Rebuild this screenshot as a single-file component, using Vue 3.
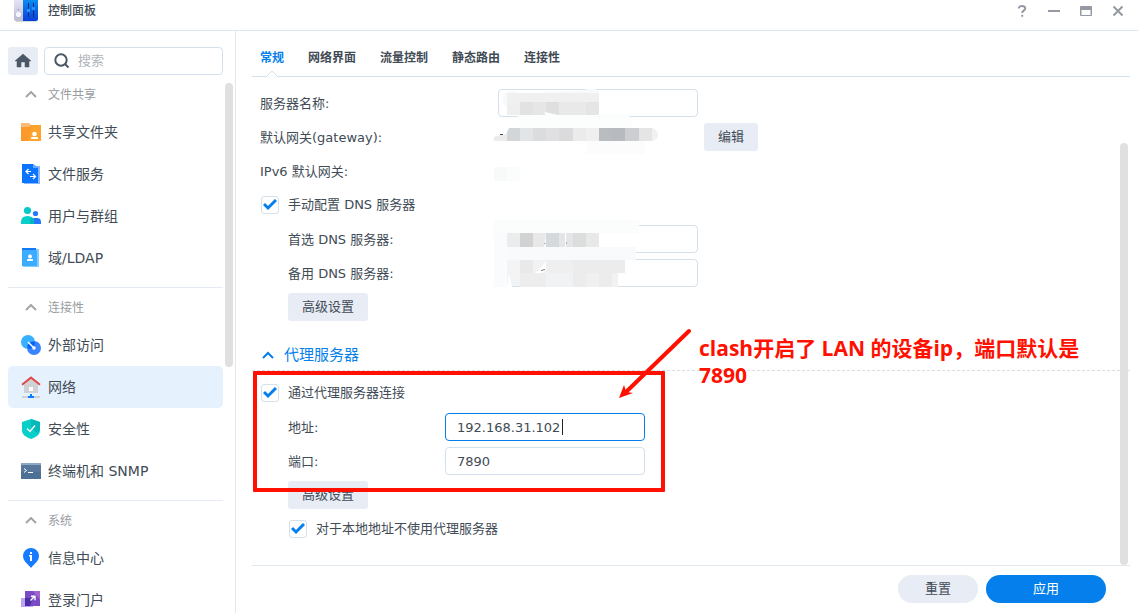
<script setup>
import { ref } from 'vue'

const groups = [
  {
    title: '文件共享',
    items: [
      { id: 'folder', label: '共享文件夹' },
      { id: 'fileservice', label: '文件服务' },
      { id: 'users', label: '用户与群组' },
      { id: 'ldap', label: '域/LDAP' },
    ],
  },
  {
    title: '连接性',
    items: [
      { id: 'external', label: '外部访问' },
      { id: 'network', label: '网络' },
      { id: 'security', label: '安全性' },
      { id: 'terminal', label: '终端机和 SNMP' },
    ],
  },
  {
    title: '系统',
    items: [
      { id: 'info', label: '信息中心' },
      { id: 'portal', label: '登录门户' },
    ],
  },
]
const active = ref('network')

const tabs = ['常规', '网络界面', '流量控制', '静态路由', '连接性']
const tab = ref('常规')

const serverName = ref('')
const dns1 = ref('')
const dns2 = ref('')
const manualDns = ref(true)
const useProxy = ref(true)
const bypassLocal = ref(true)
const address = ref('192.168.31.102')
const port = ref('7890')

// Mosaic tiles hiding private values: x, y, width, height, colour
const tiles = [
  [507, 93, 92, 9, '#f0f0f1'],
  [507, 102, 13, 13, '#efefef'],
  [520, 102, 13, 13, '#e2e2e3'],
  [533, 102, 13, 13, '#e6e6e7'],
  [546, 102, 13, 13, '#dfdfe0'],
  [559, 102, 27, 13, '#e9e9ea'],
  [586, 102, 13, 13, '#e5e5e6'],
  [507, 128, 13, 13, '#d3d6d9'],
  [520, 128, 13, 13, '#e3e4e5'],
  [533, 128, 13, 13, '#dbdcde'],
  [546, 128, 13, 13, '#e0e0e2'],
  [559, 128, 14, 13, '#dbdbdd'],
  [573, 128, 13, 13, '#ebebec'],
  [586, 128, 13, 13, '#efefef'],
  [599, 128, 13, 13, '#babdc0'],
  [612, 128, 13, 13, '#b7bbbf'],
  [625, 128, 14, 13, '#cdced2'],
  [639, 128, 13, 13, '#e5e5e6'],
  [586, 141, 59, 13, '#fcfcfc'],
  [494, 167, 13, 14, '#f8fafa'],
  [507, 167, 13, 14, '#fbfcfc'],
  [494, 220, 145, 13, '#fbfdfd'],
  [494, 233, 13, 54, '#fafbfd'],
  [507, 233, 13, 14, '#ececed'],
  [520, 233, 13, 14, '#d1d2d3'],
  [533, 233, 13, 14, '#e8e8e9'],
  [546, 233, 13, 14, '#d6d9dc'],
  [559, 233, 6, 14, '#e4e5e6'],
  [565, 233, 1, 14, '#ffffff'],
  [566, 233, 7, 14, '#e4e5e6'],
  [573, 233, 13, 14, '#dcdddd'],
  [586, 233, 13, 14, '#e8e8e9'],
  [507, 247, 129, 13, '#f9fafc'],
  [507, 260, 13, 13, '#f4f4f4'],
  [520, 260, 13, 13, '#e9e9ea'],
  [533, 260, 13, 13, '#f2f2f2'],
  [546, 260, 27, 13, '#efefef'],
  [573, 260, 52, 13, '#ececed'],
  [507, 273, 13, 13, '#f2f3f4'],
  [520, 273, 26, 14, '#ededee'],
  [546, 273, 27, 14, '#f1f2f3'],
  [573, 273, 13, 14, '#ececed'],
  [586, 273, 13, 14, '#f0f0f1'],
  [599, 273, 13, 14, '#ececed'],
  [612, 273, 6, 14, '#f2f2f3'],
]
</script>

<template>
  <div class="window">
    <header class="titlebar">
      <svg class="app-icon" width="24" height="24" viewBox="0 0 24 24" aria-hidden="true">
        <defs>
          <linearGradient id="cpBlue" x1="0" y1="0" x2="0" y2="1">
            <stop offset="0" stop-color="#0a8cf0" />
            <stop offset="1" stop-color="#0b3fd8" />
          </linearGradient>
          <linearGradient id="cpGrey" x1="0" y1="0" x2="0" y2="1">
            <stop offset="0" stop-color="#e3e3f4" />
            <stop offset="1" stop-color="#bcbcd2" />
          </linearGradient>
        </defs>
        <path d="M1 20h22l-1 2H2z" fill="#d5d8df" />
        <path d="M0 0h9v21H2a2 2 0 0 1-2-2z" fill="url(#cpGrey)" />
        <path d="M9 0h15v19a2 2 0 0 1-2 2H9z" fill="url(#cpBlue)" />
        <circle cx="4.5" cy="9.5" r=".6" fill="#777b92" />
        <circle cx="4.5" cy="15" r="3" fill="#aeb0c8" />
        <circle cx="4.5" cy="14.5" r="2.7" fill="#f5f5ff" />
        <path d="M14.500 3v14M19.500 3v14" stroke="#06287f" stroke-width="1" />
        <circle cx="14.500" cy="10.500" r="1.700" fill="#2b96ff" />
        <circle cx="19.500" cy="8.500" r="1.700" fill="#2b96ff" />
      </svg>
      <h1>控制面板</h1>
      <div class="window-tools">
        <button type="button" aria-label="帮助">
          <svg width="14" height="14" viewBox="0 0 14 14"><path d="M3.800 4.500C3.800 2.700 5.200 1.900 7 1.900s3.300.9 3.300 2.500C10.300 6.300 7.200 6.600 7.200 9M7.200 10.800v2" /></svg>
        </button>
        <button type="button" aria-label="最小化">
          <svg width="14" height="14" viewBox="0 0 14 14"><path d="M1 7h12" /></svg>
        </button>
        <button type="button" aria-label="最大化">
          <svg width="14" height="14" viewBox="0 0 14 14"><path class="solid" fill-rule="evenodd" d="M1 3q0-1 1-1h10q1 0 1 1v8q0 1-1 1H2q-1 0-1-1zM2.500 6v5h9V6z" /></svg>
        </button>
        <button type="button" aria-label="关闭">
          <svg width="14" height="14" viewBox="0 0 14 14"><path d="M2.500 2.500l9 9M11.500 2.500l-9 9" /></svg>
        </button>
      </div>
    </header>

    <div class="body">
      <aside class="sidebar">
        <div class="search-row">
          <button type="button" class="home" aria-label="主页">
            <svg width="16" height="16" viewBox="0 0 16 16"><path d="M8 1L0 8h2v6h4V9h4v5h4V8h2z" fill="#4b5766" stroke="#4b5766" stroke-width=".5" /></svg>
          </button>
          <label class="search">
            <svg width="16" height="16" viewBox="0 0 16 16"><circle cx="7" cy="7" r="5.700" /><path d="M11 11l3.500 3.500" /></svg>
            <input type="text" placeholder="搜索" aria-label="搜索" />
          </label>
        </div>
        <div class="nav-wrap">
          <nav>
            <section v-for="g in groups" :key="g.title" class="group">
              <h2>
                <svg width="12" height="8" viewBox="0 0 12 8"><path d="M1 6l5-5 5 5" /></svg>
                {{ g.title }}
              </h2>
              <a
                v-for="item in g.items"
                :key="item.id"
                href="#"
                :class="{ active: active === item.id }"
                @click.prevent="active = item.id"
              >
                <svg width="22" height="22" viewBox="0 0 22 22" aria-hidden="true">
                  <g v-if="item.id === 'folder'">
                    <path d="M1 2h8l2 2h10v4H1z" fill="#fbbb78" />
                    <path d="M1 6h8l2-2h10v16H1z" fill="#fb9a2a" />
                    <path d="M12 4h9v16H8z" fill="#ffab2e" opacity=".6" />
                    <circle cx="14.500" cy="13" r="2.300" fill="#fff" />
                    <path d="M11 18v-1q0-1 1-1h5q1 0 1 1v1z" fill="#fff" />
                  </g>
                  <g v-else-if="item.id === 'fileservice'">
                    <path d="M4 3h16v18H4z" fill="#8ab8ff" />
                    <path d="M2 1h11l5 4v15H2z" fill="#0b74ff" />
                    <path d="M13 1l5 4h-5z" fill="#69a8ff" />
                    <path d="M11 8.500H6M8.500 6L6 8.500 8.500 11M10 13.500h5.500M13 11l2.500 2.500L13 16" fill="none" stroke="#fff" stroke-width="1.200" />
                  </g>
                  <g v-else-if="item.id === 'users'">
                    <circle cx="15.500" cy="8.500" r="2.600" fill="#2378ff" />
                    <path d="M12 19v-4q0-2 2-2h3q4 0 4 4v2z" fill="#2378ff" />
                    <circle cx="7.500" cy="5.500" r="3.600" fill="#08c8cb" />
                    <path d="M1 19v-2q0-6 6.500-6T14 17v2z" fill="#08cfc9" />
                    <path d="M10 19v-4q0-2 2-2.500 2 1.500 2 4.500v2z" fill="#05b6b8" />
                  </g>
                  <g v-else-if="item.id === 'ldap'">
                    <path d="M3 2h16v18H3z" fill="#83ccff" />
                    <path d="M2 1h14v3H2z" fill="#1578f5" />
                    <path d="M2 4q0-1 1-1h13l1 1v15H2z" fill="#3bacff" />
                    <circle cx="10" cy="9.500" r="1.900" fill="#fff" />
                    <path d="M7 14v-1q0-1 1-1h4q1 0 1 1v1z" fill="#fff" />
                  </g>
                  <g v-else-if="item.id === 'external'">
                    <circle cx="8" cy="8" r="7" fill="#36b0ff" />
                    <circle cx="14" cy="14" r="7" fill="#3a84ff" />
                    <path d="M7.300 12A7 7 0 0 1 15 8a7 7 0 0 1-6.400 7 7 7 0 0 1-1.300-3z" fill="#0464f5" />
                    <path d="M8 8l6 6" fill="none" stroke="#fff" stroke-width="1.500" />
                    <circle cx="14" cy="14" r="1.700" fill="#fff" />
                  </g>
                  <g v-else-if="item.id === 'network'">
                    <path d="M4 8.500L11 3l7 5.500V17H4z" fill="#cfd1d4" />
                    <path d="M9 11h4v4H9z" fill="#fff" />
                    <path d="M2 8.800L11 1.600l9 7.200" fill="none" stroke="#dc4a48" stroke-width="2" />
                    <path d="M2 20h18v2H2z" fill="#cfd1d4" />
                    <path d="M10 18h2v2h2v2H8v-2h2z" fill="#0c7bff" />
                  </g>
                  <g v-else-if="item.id === 'security'">
                    <path d="M11 1l9 3v8c0 5-4 7-9 9-5-2-9-4-9-9V4z" fill="#08cfc8" />
                    <path d="M11 1l9 3v8l-3 3-6-6z" fill="#05b9ba" />
                    <path d="M7 10.500l3 3 5-6" fill="none" stroke="#fff" stroke-width="1.400" />
                  </g>
                  <g v-else-if="item.id === 'terminal'">
                    <path d="M1 3h20v16H1z" fill="#57789c" />
                    <path d="M1 3h20v2H1z" fill="#8fa9c4" />
                    <path d="M1 12h20v7H1z" fill="#466a91" opacity=".6" />
                    <path d="M4 8.500l2.500 2L4 12.500M8 12.500h5" fill="none" stroke="#fff" />
                  </g>
                  <g v-else-if="item.id === 'info'">
                    <path d="M11 1a8 8 0 0 1 8 8c0 5-5 8-8 12-3-4-8-7-8-12a8 8 0 0 1 8-8z" fill="#167bff" />
                    <path d="M10 5h2v2h-2zM9 8h3v6h-2V9.500H9z" fill="#fff" />
                  </g>
                  <g v-else>
                    <path d="M1 9h12v9H1z" fill="#bca4f0" />
                    <path d="M5 2h15v15H5z" fill="#7a4bc4" />
                    <path d="M5 9h8l-3 8H5z" fill="#4c2fa6" />
                    <path d="M13 2h7v9z" fill="#a262d2" />
                    <path d="M10.500 11.500l4-4M11 7.200h4v4" fill="none" stroke="#fff" stroke-width="1.400" />
                  </g>
                </svg>
                {{ item.label }}
              </a>
            </section>
          </nav>
          <div class="nav-scroll"></div>
        </div>
      </aside>

      <main class="main">
        <div class="tabs" role="tablist">
          <button
            v-for="t in tabs"
            :key="t"
            type="button"
            role="tab"
            :class="{ on: t === tab }"
            :aria-selected="t === tab"
            @click="tab = t"
          >
            {{ t }}
            <svg v-if="t === tab" width="12" height="7" viewBox="0 0 12 7"><path d="M0 7l6-6 6 6" /></svg>
          </button>
        </div>

        <form class="form" @submit.prevent>
          <div class="row">
            <label class="name" for="server">服务器名称:</label>
            <input id="server" v-model="serverName" class="text" type="text" />
          </div>
          <div class="row">
            <span class="name">默认网关(gateway):</span>
            <span class="value"></span>
            <button type="button" class="btn small">编辑</button>
          </div>
          <div class="row"><span class="name">IPv6 默认网关:</span></div>
          <div class="row">
            <label class="check">
              <input v-model="manualDns" type="checkbox" />
              <svg v-if="manualDns" width="14" height="12" viewBox="0 0 14 12"><path d="M1 5l4 4 8-8" /></svg>
              手动配置 DNS 服务器
            </label>
          </div>
          <div class="row sub">
            <label class="name" for="dns1">首选 DNS 服务器:</label>
            <input id="dns1" v-model="dns1" class="text" type="text" />
          </div>
          <div class="row sub">
            <label class="name" for="dns2">备用 DNS 服务器:</label>
            <input id="dns2" v-model="dns2" class="text" type="text" />
          </div>
          <div class="row sub"><button type="button" class="btn">高级设置</button></div>

          <h3>
            <svg width="12" height="8" viewBox="0 0 12 8"><path d="M1 7l5-5 5 5" /></svg>
            代理服务器
          </h3>

          <div class="row">
            <label class="check">
              <input v-model="useProxy" type="checkbox" />
              <svg v-if="useProxy" width="14" height="12" viewBox="0 0 14 12"><path d="M1 5l4 4 8-8" /></svg>
              通过代理服务器连接
            </label>
          </div>
          <div class="row sub proxy">
            <label class="name" for="addr">地址:</label>
            <span class="field">
              <input id="addr" v-model="address" class="text focused" type="text" />
              <i class="caret"></i>
            </span>
          </div>
          <div class="row sub proxy">
            <label class="name" for="port">端口:</label>
            <input id="port" v-model="port" class="text" type="text" />
          </div>
          <div class="row sub"><button type="button" class="btn">高级设置</button></div>
          <div class="row sub">
            <label class="check">
              <input v-model="bypassLocal" type="checkbox" />
              <svg v-if="bypassLocal" width="14" height="12" viewBox="0 0 14 12"><path d="M1 5l4 4 8-8" /></svg>
              对于本地地址不使用代理服务器
            </label>
          </div>

          <svg class="mosaic" width="180" height="204" viewBox="488 86 180 204" aria-hidden="true">
            <path d="M507 92q-6 4-4 11l4 5h92V91q-5-4-15-1l-63 4q-7-4-14-2z" fill="#f8f9f9" />
            <path d="M518 115h80l2 2 2-3h27l3 14h-18l-15 13h-93l15-13z" fill="#fcfdfd" />
            <path d="M494 141v-4l13-4v8z" fill="#ebebec" />
            <path d="M652 128q6 2 6 7t-6 6z" fill="#f1f1f1" />
            <rect v-for="(t, i) in tiles" :key="i" :x="t[0]" :y="t[1]" :width="t[2]" :height="t[3]" :fill="t[4]" />
            <path d="M544 112l14 3h-12z" fill="#fff" />
            <path d="M494 136V128h15l-3 6z" fill="#fff" />
            <path d="M500 134h3v1h-3z" fill="#414b55" />
            <path d="M535 273q9-7 11-13v10l-4 3z" fill="#fff" />
            <path d="M541 270.500l4-1M544 243.500h2M566 243h1" stroke="#777" fill="none" />
            <path d="M546 233v14h-2z" fill="#fff" opacity=".7" />
            <path d="M509 273l3 14h-5z" fill="#fff" />
          </svg>
        </form>

        <div class="main-scroll"></div>

        <footer class="actions">
          <button type="button" class="reset">重置</button>
          <button type="button" class="apply">应用</button>
        </footer>
      </main>
    </div>

    <div class="mark"></div>
    <svg class="arrow" width="80" height="80" viewBox="0 0 80 80" aria-hidden="true">
      <path d="M74 6L11 67" stroke="#ff1000" stroke-width="4" stroke-linecap="round" />
      <path d="M4 73l5-13 2 6 1 1 6 1z" fill="#ff1000" />
    </svg>
    <p class="note">clash开启了 LAN 的设备ip，端口默认是<br />7890</p>
  </div>
</template>

<style>
body {
  background: #fff;
  overflow: hidden;
}
</style>

<style scoped>
* {
  box-sizing: border-box;
}
.window {
  position: relative;
  display: flex;
  flex-direction: column;
  height: 100vh;
  overflow: hidden;
  background: #fff;
  color: #414b55;
  font: 13px/20px "DejaVu Sans", "Noto Sans CJK SC", sans-serif;
}
button,
input {
  font: inherit;
  color: inherit;
}
button {
  padding: 0;
  border: 0;
  background: none;
}
svg {
  flex: none;
}
.titlebar {
  display: flex;
  flex: none;
  align-items: flex-start;
  height: 31px;
  padding: 0 12px 0 14px;
  border-bottom: 1px solid #dce6ef;
}
.titlebar h1 {
  flex: 1;
  margin: 0 0 0 10px;
  font-size: 12px;
  font-weight: 500;
  line-height: 22px;
}
.window-tools {
  display: flex;
  gap: 16px;
  padding-top: 3px;
}
.window-tools button {
  display: flex;
  align-items: center;
  justify-content: center;
  width: 16px;
  height: 16px;
}
.window-tools path {
  fill: none;
  stroke: #9499a3;
  stroke-width: 2;
}
.window-tools .solid {
  fill: #9499a3;
  stroke: none;
}
.body {
  display: flex;
  flex: 1;
  min-height: 0;
}
.sidebar {
  display: flex;
  flex: none;
  flex-direction: column;
  width: 236px;
  padding: 16px 2px 0 8px;
  border-right: 1px solid #dfe7ef;
}
.search-row {
  display: flex;
  gap: 6px;
  padding-right: 10px;
}
.home {
  display: flex;
  align-items: center;
  justify-content: center;
  width: 30px;
  height: 28px;
  border-radius: 3px;
  background: #e8ecf5;
}
.search {
  display: flex;
  flex: 1;
  gap: 8px;
  align-items: center;
  min-width: 0;
  height: 28px;
  padding: 0 9px;
  border: 1px solid #d4e0eb;
  border-radius: 4px;
}
.search svg {
  fill: none;
  stroke: #4b5766;
  stroke-width: 2;
}
.search input {
  flex: 1;
  min-width: 0;
  padding: 0;
  border: 0;
  outline: 0;
  background: none;
}
.search input::placeholder {
  color: #b0b5bb;
}
.nav-wrap {
  display: flex;
  flex: 1;
  gap: 2px;
  min-height: 0;
  margin-top: 3px;
}
nav {
  flex: 1;
  min-width: 0;
  overflow: hidden;
}
.nav-scroll {
  width: 8px;
  height: 53%;
  margin-top: 5px;
  border-radius: 4px;
  background: #e0e0e0;
}
.group {
  padding-bottom: 8px;
}
.group + .group {
  padding-top: 3px;
  border-top: 1px solid #e4ebf3;
}
.group h2 {
  display: flex;
  align-items: center;
  gap: 11px;
  height: 33px;
  margin: 0;
  padding-left: 17px;
  color: #979ca2;
  font-size: 12px;
  font-weight: 400;
}
.group h2 path {
  fill: none;
  stroke: #a2a5aa;
  stroke-width: 2;
}
.group a {
  display: flex;
  align-items: center;
  gap: 6px;
  height: 42px;
  padding-left: 12px;
  border-radius: 5px;
  color: #414b55;
  font-size: 14px;
  text-decoration: none;
}
.group a.active {
  background: #e6f1fe;
}
.main {
  position: relative;
  display: flex;
  flex: 1;
  flex-direction: column;
  min-width: 0;
  padding: 0 8px 0 16px;
}
.tabs {
  display: flex;
  flex: none;
  gap: 24px;
  height: 46px;
  padding: 0 8px;
  border-bottom: 1px solid #d4e0eb;
}
.tabs button {
  position: relative;
  padding-bottom: 8px;
  padding-top: 16px;
  font-size: 12px;
  font-weight: 700;
  line-height: 20px;
}
.tabs .on {
  color: #057feb;
}
.tabs svg {
  position: absolute;
  bottom: -1px;
  left: 6px;
  fill: #fff;
  stroke: #d4e0eb;
}
.form {
  position: relative;
  flex: 1;
  min-height: 0;
  padding-top: 9px;
  overflow: hidden;
}
.row {
  display: flex;
  align-items: center;
  height: 34px;
  padding-left: 8px;
}
.row.sub {
  padding-left: 36px;
}
.name {
  flex: none;
  width: 238px;
  padding-top: 2px;
}
.sub .name {
  width: 210px;
}
.proxy .name {
  width: 157px;
}
.value {
  width: 206px;
}
.text {
  width: 200px;
  height: 28px;
  padding: 0 11px;
  border: 1px solid #d4e0eb;
  border-radius: 4px;
  outline: 0;
  background: #fff;
}
.focused {
  border-color: #057feb;
}
.field {
  position: relative;
  display: flex;
}
.caret {
  position: absolute;
  top: 6px;
  left: 117px;
  width: 1px;
  height: 16px;
  background: #222;
}
.btn {
  width: 80px;
  height: 28px;
  border-radius: 3px;
  background: #e8ecf5;
}
.btn.small {
  width: 54px;
}
.check {
  position: relative;
  display: flex;
  align-items: center;
  gap: 9px;
  padding-left: 1px;
}
.check input {
  width: 18px;
  height: 18px;
  margin: 0;
  border: 1px solid #d4e0eb;
  border-radius: 3px;
  appearance: none;
  background: #fff;
}
.check svg {
  position: absolute;
  left: 3px;
  fill: none;
  stroke: #057feb;
  stroke-width: 3;
  pointer-events: none;
}
.form h3 {
  display: flex;
  align-items: center;
  gap: 10px;
  height: 47px;
  margin: 0 0 5px;
  padding: 16px 10px 0;
  border-bottom: 1px dashed #d4dfe8;
  color: #057feb;
  font-size: 15px;
  font-weight: 400;
}
.form h3 path {
  fill: none;
  stroke: #057feb;
  stroke-width: 2;
}
.mosaic {
  position: absolute;
  top: 9px;
  left: 236px;
  pointer-events: none;
}
.main-scroll {
  position: absolute;
  top: 112px;
  right: 10px;
  bottom: 48px;
  width: 8px;
  border-radius: 4px;
  background: #e0e0e0;
}
.actions {
  display: flex;
  flex: none;
  gap: 8px;
  justify-content: flex-end;
  height: 48px;
  padding: 9px 24px 10px 0;
  border-top: 1px solid #e0e8ef;
}
.actions button {
  height: 28px;
  border-radius: 14px;
}
.reset {
  width: 80px;
  background: #e8ecf5;
}
.actions .apply {
  width: 120px;
  background: #057feb;
  color: #fff;
}
.mark {
  position: absolute;
  top: 371px;
  left: 253px;
  width: 412px;
  height: 121px;
  border: 4px solid #ff1000;
  border-radius: 1px;
  pointer-events: none;
}
.arrow {
  position: absolute;
  top: 325px;
  left: 615px;
  pointer-events: none;
}
.note {
  position: absolute;
  top: 335px;
  left: 699px;
  margin: 0;
  color: #ff1000;
  font: 700 21px/27px "Open Sans", "Noto Sans CJK SC", sans-serif;
  white-space: nowrap;
}
</style>
